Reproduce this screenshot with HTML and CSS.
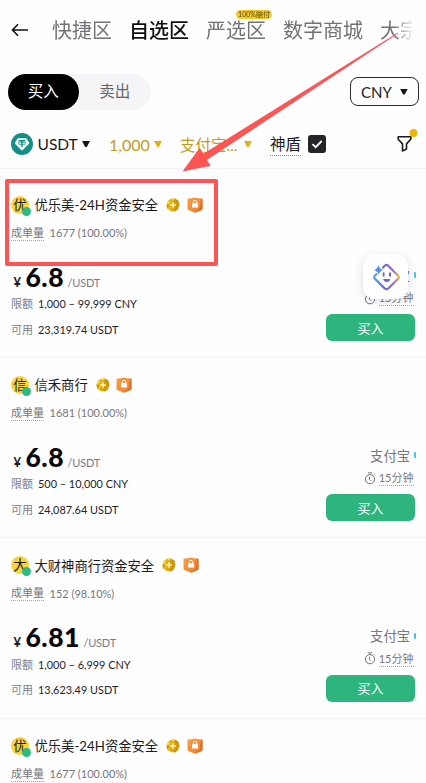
FILE: index.html
```html
<!DOCTYPE html>
<html lang="zh-CN">
<head>
<meta charset="utf-8">
<title>自选区</title>
<link rel="stylesheet" href="styles.css">
</head>
<body>
<svg class="defs" width="0" height="0">
  <defs>
    <linearGradient id="gold" x1="0" x2="1"><stop offset="0" stop-color="#f3c71d"/><stop offset=".5" stop-color="#dba70e"/><stop offset="1" stop-color="#c98f08"/></linearGradient>
    <linearGradient id="orange" x1="0" y1="0" x2="1" y2="1"><stop offset="0" stop-color="#f4a24c"/><stop offset=".6" stop-color="#f58a32"/><stop offset="1" stop-color="#d9701f"/></linearGradient>
    <linearGradient id="face" x1="0" x2="1"><stop offset="0" stop-color="#4aa8f5"/><stop offset=".35" stop-color="#6f67d8"/><stop offset=".75" stop-color="#8a6ae0"/><stop offset="1" stop-color="#f4ae45"/></linearGradient>
    <symbol id="coin" viewBox="0 0 14 14">
      <path d="M5 .8 9 .4 12.6 3 13.5 7 12 11.3 8.6 13.6 4.6 13.1 1.2 10.7.5 6.6 2 2.8z" fill="url(#gold)"/>
      <path d="M9 .4 12.6 3 10 4.2zM.5 6.6 3.4 7 1.2 10.7zM8.6 13.6 8.4 11 12 11.3z" fill="#c8930c"/>
      <path d="M5 .8 9 .4 7 3zM2 2.8 4.4 4.4.5 6.6z" fill="#f8d944"/>
      <path d="M7 4.2v5.6M4.200 7h5.600" stroke="#fff6ba" stroke-width="1.500"/>
    </symbol>
    <symbol id="shield" viewBox="0 0 16 16">
      <path d="M1.600 1.500Q5 1.400 8 .4q3 1 6.400 1.100 1.100.1 1.100 1.300v9q0 .9-.8 1.300L8 15.700l-6.700-2.600q-.8-.4-.8-1.300v-9q0-1.200 1.100-1.300z" fill="url(#orange)"/>
      <path d="M14.300 1.500q1.200.1 1.200 1.300v9q0 .9-.8 1.300L8 15.700l4.300-4z" fill="#d9742c"/>
      <path d="M3.500 3h9v8L8 12.800 3.500 11z" fill="#f88e3c"/>
      <rect x="5" y="6" width="6" height="4.500" rx=".6" fill="#fff"/>
      <path d="M6.300 6V5a1.700 1.700 0 0 1 3.400 0v1" fill="none" stroke="#fff" stroke-width="1"/>
    </symbol>
    <symbol id="timer" viewBox="0 0 12 13">
      <circle cx="6" cy="7.200" r="4.600" fill="none" stroke="#747478"/>
      <path d="M3.800.9h4.400M5.500 4.700v2.600l1.400 1.500M10 2.200l1 1" fill="none" stroke="#747478"/>
    </symbol>
  </defs>
</svg>

<main class="screen">
  <header class="tabs">
    <svg class="back" width="18" height="14" viewBox="0 0 18 14"><path d="M1.500 7h15.500M7 1.200 1.500 7 7 12.800" fill="none" stroke="#111" stroke-width="1.600"/></svg>
    <nav class="tab-list">
      <span class="tab">快捷区</span>
      <span class="tab active">自选区</span>
      <span class="tab">严选区<i class="promo">100%赔付</i></span>
      <span class="tab">数字商城</span>
      <span class="tab">大宗</span>
    </nav>
  </header>

  <div class="mode-row">
    <div class="segment"><span class="seg on">买入</span><span class="seg">卖出</span></div>
    <div class="currency">CNY<i class="caret"></i></div>
  </div>

  <div class="filters">
    <svg class="tether" width="22" height="22" viewBox="0 0 22 22">
      <circle cx="11" cy="11" r="11" fill="#128f87"/>
      <path d="M6.700 5.300h8.600l3.100 5L11 17.800l-7.400-7.500z" fill="#fff"/>
      <path d="M7.500 7.700h7M11 7.700v6.300" stroke="#128f87" stroke-width="1.400"/>
      <ellipse cx="11" cy="10.300" rx="4" ry="1.200" fill="none" stroke="#128f87" stroke-width=".8"/>
    </svg>
    <span class="coin-name">USDT</span><i class="caret"></i>
    <span class="amount">1,000</span><i class="caret gold"></i>
    <span class="method">支付宝...</span><i class="caret gold"></i>
    <span class="guard">神盾</span>
    <svg class="check" width="18" height="18" viewBox="0 0 18 18"><rect width="18" height="18" rx="3" fill="#252529"/><path d="m4.500 9.200 3.200 3 6-6.200" fill="none" stroke="#fff" stroke-width="1.800"/></svg>
    <svg class="funnel" width="22" height="24" viewBox="0 0 22 24"><path d="M2.200 8.800h12.600v2.500l-4.300 4.600v5.100l-4 2v-7.100l-4.300-4.600z" fill="none" stroke="#1c1c1f" stroke-width="1.600" stroke-linejoin="round"/><circle cx="17.500" cy="5" r="4" fill="#eeb50e"/></svg>
  </div>

  <section class="offers">
    <article class="offer">
      <div class="seller"><span class="avatar">优</span><span class="name">优乐美-24H资金安全</span><svg class="coin"><use href="#coin"/></svg><svg class="shield"><use href="#shield"/></svg></div>
      <div class="stats"><span class="dotted">成单量</span><span class="nums">1677 (100.00%)</span></div>
      <div class="detail">
        <div class="info">
          <div class="price"><span class="yen">¥</span><b>6.8</b><span class="unit">/USDT</span></div>
          <div class="line"><span>限额</span><em>1,000 – 99,999 CNY</em></div>
          <div class="line"><span>可用</span><em>23,319.74 USDT</em></div>
        </div>
        <div class="action">
          <div class="pay">支付宝<i></i></div>
          <div class="time"><svg><use href="#timer"/></svg><span class="dotted">15分钟</span></div>
          <button class="buy">买入</button>
          <div class="assistant"><svg width="32" height="32" viewBox="0 0 32 32">
            <path d="M13 6.500 14.800 4.700q1.700-1.500 3.400 0L28 14.500q1.700 1.700 0 3.400L18.200 27.500q-1.700 1.500-3.400 0L5 17.900q-1.700-1.700 0-3.400l1.300-1.300" fill="none" stroke="url(#face)" stroke-width="2.200" stroke-linecap="round"/>
            <path d="M8.500 4q.9 4.200 5 5-4.100.8-5 5-.9-4.200-5-5 4.100-.8 5-5z" fill="#5290ed"/>
            <path d="M13.600 12.200v2.500M20 12.200v2.500" stroke="#7166d4" stroke-width="2" stroke-linecap="round"/>
            <path d="M13.200 18h7.200q-.7 3-3.600 3t-3.600-3z" fill="#7166d4"/>
          </svg></div>
        </div>
      </div>
    </article>

    <article class="offer">
      <div class="seller"><span class="avatar">信</span><span class="name">信禾商行</span><svg class="coin"><use href="#coin"/></svg><svg class="shield"><use href="#shield"/></svg></div>
      <div class="stats"><span class="dotted">成单量</span><span class="nums">1681 (100.00%)</span></div>
      <div class="detail">
        <div class="info">
          <div class="price"><span class="yen">¥</span><b>6.8</b><span class="unit">/USDT</span></div>
          <div class="line"><span>限额</span><em>500 – 10,000 CNY</em></div>
          <div class="line"><span>可用</span><em>24,087.64 USDT</em></div>
        </div>
        <div class="action">
          <div class="pay">支付宝<i></i></div>
          <div class="time"><svg><use href="#timer"/></svg><span class="dotted">15分钟</span></div>
          <button class="buy">买入</button>
        </div>
      </div>
    </article>

    <article class="offer">
      <div class="seller"><span class="avatar">大</span><span class="name">大财神商行资金安全</span><svg class="coin"><use href="#coin"/></svg><svg class="shield"><use href="#shield"/></svg></div>
      <div class="stats"><span class="dotted">成单量</span><span class="nums">152 (98.10%)</span></div>
      <div class="detail">
        <div class="info">
          <div class="price"><span class="yen">¥</span><b>6.81</b><span class="unit">/USDT</span></div>
          <div class="line"><span>限额</span><em>1,000 – 6,999 CNY</em></div>
          <div class="line"><span>可用</span><em>13,623.49 USDT</em></div>
        </div>
        <div class="action">
          <div class="pay">支付宝<i></i></div>
          <div class="time"><svg><use href="#timer"/></svg><span class="dotted">15分钟</span></div>
          <button class="buy">买入</button>
        </div>
      </div>
    </article>

    <article class="offer">
      <div class="seller"><span class="avatar">优</span><span class="name">优乐美-24H资金安全</span><svg class="coin"><use href="#coin"/></svg><svg class="shield"><use href="#shield"/></svg></div>
      <div class="stats"><span class="dotted">成单量</span><span class="nums">1677 (100.00%)</span></div>
    </article>
  </section>

  <div class="highlight"></div>
  <svg class="arrow" width="426" height="783" viewBox="0 0 426 783"><path d="M182.500 171.500 199.500 148l4.300 5.500L398 32.500v1L206.800 160l4 5.700z" fill="#fd5553"/></svg>
</main>
</body>
</html>
```
FILE: styles.css
```css
* { box-sizing: border-box; }
body {
  margin: 0;
  background: #fefdff;
  color: #1c1c20;
  font-family: Lato, "Noto Sans CJK SC", sans-serif;
}
i, em { font-style: normal; }
.defs { position: absolute; }
.screen { position: relative; width: 426px; height: 783px; overflow: hidden; }

.tabs { display: flex; align-items: center; height: 60px; padding-left: 11px; }
.back { flex: none; margin-right: 23px; }
.tab-list {
  display: flex;
  gap: 17px;
  width: 374px;
  height: 60px;
  align-items: center;
  -webkit-mask-image: linear-gradient(90deg, #000 341px, transparent 362px);
  mask-image: linear-gradient(90deg, #000 341px, transparent 362px);
}
.tab { position: relative; flex: none; font-size: 20px; line-height: 30px; color: #737377; }
.tab.active { color: #101013; font-weight: 500; }
.promo {
  position: absolute;
  left: 30px;
  top: -5px;
  width: 36px;
  height: 9px;
  border-radius: 5px;
  background: #f3cc30;
  color: #4d3d08;
  font-size: 7px;
  line-height: 9px;
  text-align: center;
  white-space: nowrap;
}

.mode-row { display: flex; justify-content: space-between; height: 60px; padding: 14px 7px 0 7.500px; }
.segment { display: flex; width: 143px; height: 36px; border-radius: 18px; background: #f5f4f7; }
.seg { width: 72px; border-radius: 18px; font-size: 15.500px; line-height: 35px; text-align: center; color: #66666a; }
.seg.on { background: #000; color: #fff; }
.currency {
  display: flex;
  align-items: center;
  justify-content: center;
  gap: 8px;
  width: 69px;
  height: 29px;
  margin-top: 3px;
  border: 1px solid #29292c;
  border-radius: 8px;
  font-size: 15px;
}
.caret { flex: none; width: 8px; height: 6px; background: #151518; clip-path: polygon(0 0, 100% 0, 60% 100%, 40% 100%); }
.caret.gold { background: #e3b01b; }

.filters { display: flex; align-items: center; height: 49px; padding-left: 11px; border-bottom: 1px solid #f3f2f5; font-size: 16px; }
.tether { margin-right: 4.500px; }
.coin-name { width: 39.500px; margin-right: 5px; font-size: 15.500px; }
.amount { width: 39px; margin: 0 6px 0 19px; color: #c59c18; }
.method { width: 58px; margin: 0 6px 0 18px; color: #c59c18; white-space: nowrap; font-size: 15.500px; }
.guard { margin: 1px 7px 0 18px; font-size: 15.500px; line-height: 22px; border-bottom: 1px dotted #8b8b90; }
.funnel { margin: -8px 0 0 70px; }

.offers { padding-top: 8.500px; }
.offer { height: 180.400px; padding: 16.500px 10px 0 11px; border-bottom: 1px solid #f3f2f5; }
.seller { display: flex; align-items: center; height: 21px; }
.avatar { position: relative; flex: none; width: 18px; height: 18px; margin-right: 5.500px; border-radius: 50%; background: #f8d33c; font-size: 13.500px; line-height: 18px; text-align: center; }
.avatar::after { content: ""; position: absolute; left: 11px; top: 11px; width: 9px; height: 9px; border-radius: 50%; background: #2db981; }
.name { font-size: 13.300px; white-space: nowrap; }
.coin { width: 14px; height: 14px; margin-left: 8px; }
.shield { width: 16px; height: 16px; margin-left: 6.500px; }
.stats { display: flex; align-items: center; height: 17px; margin-top: 9px; font-size: 11px; color: #77777b; }
.dotted { border-bottom: 1px dotted #a5a5aa; line-height: 15px; }
.nums { margin-left: 5.500px; letter-spacing: 0; }
.detail { display: flex; justify-content: space-between; }
.info { padding-top: 17.500px; }
.price { display: flex; align-items: baseline; height: 37.500px; line-height: 37px; }
.yen { width: 12px; margin-left: 2.500px; font-size: 13px; font-weight: 700; }
.price b { font-size: 26.500px; font-weight: 900; letter-spacing: .5px; color: #08080a; }
.unit { margin-left: 3.500px; font-size: 11px; letter-spacing: -.2px; color: #7c7c80; }
.line { display: flex; height: 25.500px; line-height: 16px; font-size: 10.900px; white-space: nowrap; }
.line span { width: 27px; font-size: 11px; color: #808085; }
.line em { color: #242428; }
.action { position: relative; width: 90px; padding-top: 25px; }
.pay { display: flex; justify-content: flex-end; align-items: center; height: 18px; font-size: 13.300px; color: #77777b; }
.pay i { width: 2px; height: 6px; margin-left: 4px; border-radius: 1px; background: #45c4ec; }
.time { display: flex; justify-content: flex-end; align-items: center; height: 18px; margin: 5px 2.500px 0 0; font-size: 11px; color: #77777b; }
.time svg { width: 12px; height: 13px; margin-right: 3px; }
.buy { display: block; width: 89px; height: 27px; margin-top: 7px; padding: 0; border: 0; border-radius: 6px; background: #2eb57e; color: #fff; font: 13px/26px Lato, "Noto Sans CJK SC", sans-serif; }
.assistant { position: absolute; left: 37px; top: 13px; width: 45px; height: 45px; padding: 6.500px; border-radius: 12px; background: #fff; box-shadow: 0 2px 10px rgba(50, 50, 70, .16); }

.highlight { position: absolute; left: 5px; top: 179px; width: 213px; height: 87px; border: 4px solid #fd5553; border-radius: 2px; }
.arrow { position: absolute; left: 0; top: 0; }
```
